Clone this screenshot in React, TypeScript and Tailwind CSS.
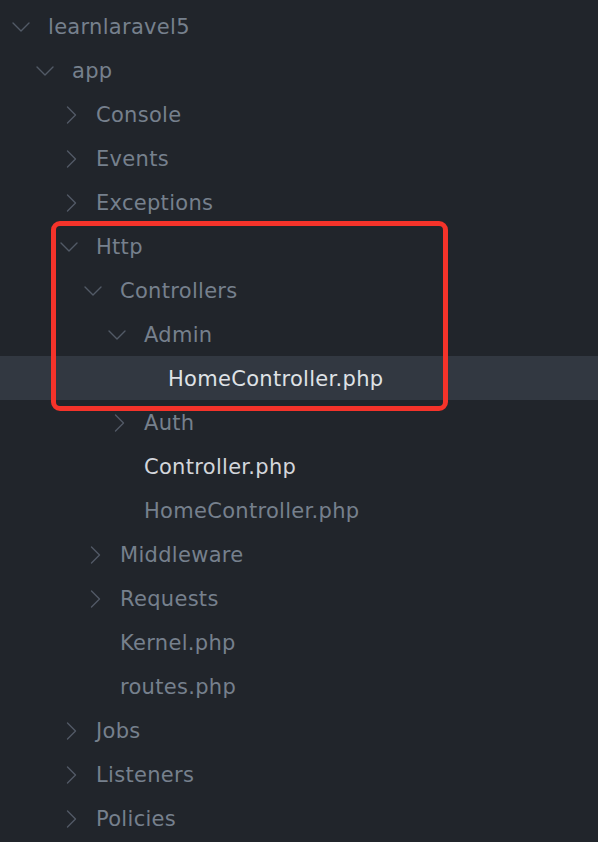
type Node = {
  name: string;
  depth: number;
  kind: 'open' | 'closed' | 'file';
  tone?: 'muted' | 'bright' | 'selected';
};

const tree: Node[] = [
  { name: 'learnlaravel5', depth: 0, kind: 'open' },
  { name: 'app', depth: 1, kind: 'open' },
  { name: 'Console', depth: 2, kind: 'closed' },
  { name: 'Events', depth: 2, kind: 'closed' },
  { name: 'Exceptions', depth: 2, kind: 'closed' },
  { name: 'Http', depth: 2, kind: 'open' },
  { name: 'Controllers', depth: 3, kind: 'open' },
  { name: 'Admin', depth: 4, kind: 'open' },
  { name: 'HomeController.php', depth: 5, kind: 'file', tone: 'selected' },
  { name: 'Auth', depth: 4, kind: 'closed' },
  { name: 'Controller.php', depth: 4, kind: 'file', tone: 'bright' },
  { name: 'HomeController.php', depth: 4, kind: 'file' },
  { name: 'Middleware', depth: 3, kind: 'closed' },
  { name: 'Requests', depth: 3, kind: 'closed' },
  { name: 'Kernel.php', depth: 3, kind: 'file' },
  { name: 'routes.php', depth: 3, kind: 'file' },
  { name: 'Jobs', depth: 2, kind: 'closed' },
  { name: 'Listeners', depth: 2, kind: 'closed' },
  { name: 'Policies', depth: 2, kind: 'closed' },
];

// indent per level is 24px, text starts at 48px on level 0
const indent = ['pl-[12px]', 'pl-[36px]', 'pl-[60px]', 'pl-[84px]', 'pl-[108px]', 'pl-[132px]'];

function Chevron({ open }: { open: boolean }) {
  return open ? (
    <svg width="18" height="18" viewBox="0 0 18 18" fill="none" className="mt-[2px]">
      <polyline points="1,5 9,13 17,5" stroke="#525a66" strokeWidth="1.4" strokeLinecap="round" strokeLinejoin="round" />
    </svg>
  ) : (
    <svg width="12" height="18" viewBox="0 0 12 18" fill="none" className="ml-[6px] mt-[1px]">
      <polyline points="1.5,1 9.5,9 1.5,17" stroke="#525a66" strokeWidth="1.4" strokeLinecap="round" strokeLinejoin="round" />
    </svg>
  );
}

function Row({ node }: { node: Node }) {
  const color =
    node.tone === 'selected'
      ? 'text-[#dfe2e6]'
      : node.tone === 'bright'
        ? 'text-[#d3d6db]'
        : 'text-[#76808d]';
  return (
    <div
      className={`h-[44px] flex items-center ${indent[node.depth]} ${
        node.tone === 'selected' ? 'bg-[#323841]' : ''
      }`}
    >
      <span className="w-[36px] flex items-center">
        {node.kind !== 'file' && <Chevron open={node.kind === 'open'} />}
      </span>
      <span className={`text-[21px] leading-none tracking-[0.3px] pt-[2px] ${color}`}>{node.name}</span>
    </div>
  );
}

export default function App() {
  return (
    <div
      className="w-[598px] h-[842px] bg-[#21252b] overflow-hidden relative pt-[4px]"
      style={{ fontFamily: '"DejaVu Sans", "Open Sans", sans-serif' }}
    >
      {tree.map((n, i) => (
        <Row key={i} node={n} />
      ))}

      {/* red annotation box */}
      <div className="absolute left-[51px] top-[221px] w-[397px] h-[190px] border-[5px] border-[#f5332a] rounded-[9px]" />
    </div>
  );
}
